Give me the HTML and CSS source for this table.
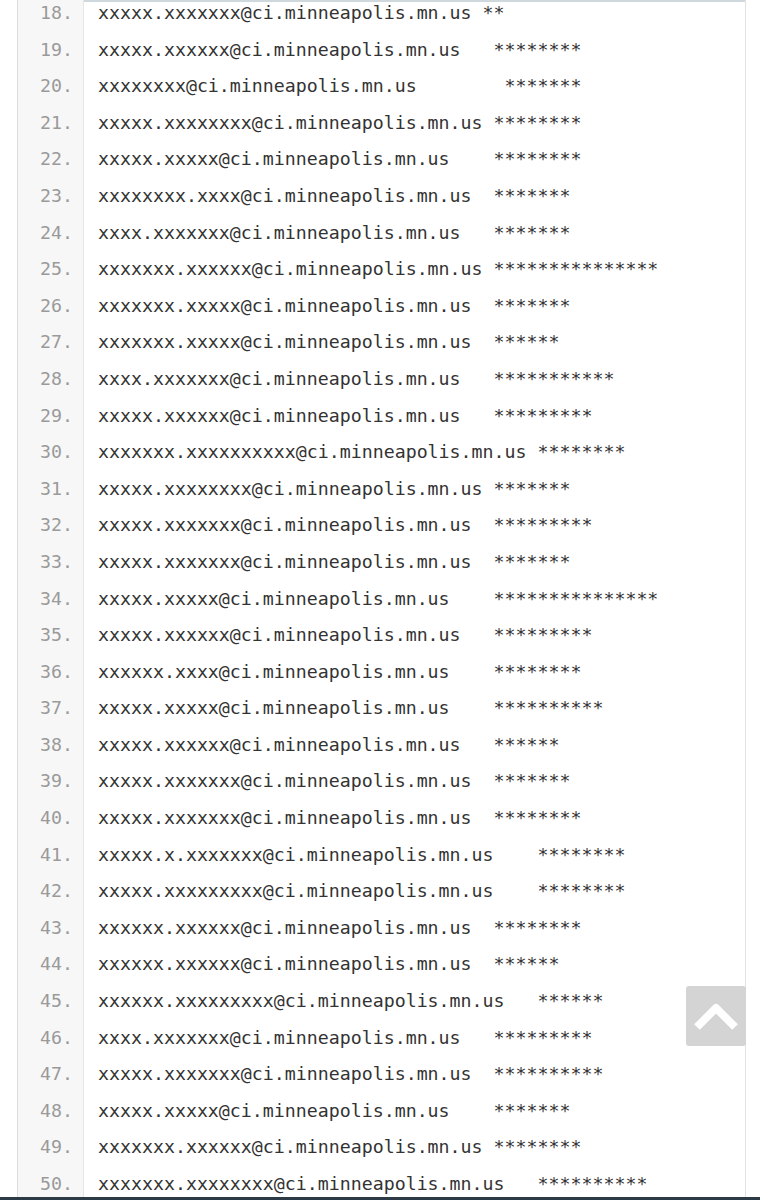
FILE: index.html
```html
<!DOCTYPE html>
<html lang="en">
<head>
	<meta charset="UTF-8">
	<title>listing</title>
	<link rel="stylesheet" href="styles.css">
</head>
<body>
	<div class="frame">
		<div class="listing">
			<div class="row"><span class="num">18.</span><span class="line">xxxxx.xxxxxxx@ci.minneapolis.mn.us **</span></div>
			<div class="row"><span class="num">19.</span><span class="line">xxxxx.xxxxxx@ci.minneapolis.mn.us   ********</span></div>
			<div class="row"><span class="num">20.</span><span class="line">xxxxxxxx@ci.minneapolis.mn.us        *******</span></div>
			<div class="row"><span class="num">21.</span><span class="line">xxxxx.xxxxxxxx@ci.minneapolis.mn.us ********</span></div>
			<div class="row"><span class="num">22.</span><span class="line">xxxxx.xxxxx@ci.minneapolis.mn.us    ********</span></div>
			<div class="row"><span class="num">23.</span><span class="line">xxxxxxxx.xxxx@ci.minneapolis.mn.us  *******</span></div>
			<div class="row"><span class="num">24.</span><span class="line">xxxx.xxxxxxx@ci.minneapolis.mn.us   *******</span></div>
			<div class="row"><span class="num">25.</span><span class="line">xxxxxxx.xxxxxx@ci.minneapolis.mn.us ***************</span></div>
			<div class="row"><span class="num">26.</span><span class="line">xxxxxxx.xxxxx@ci.minneapolis.mn.us  *******</span></div>
			<div class="row"><span class="num">27.</span><span class="line">xxxxxxx.xxxxx@ci.minneapolis.mn.us  ******</span></div>
			<div class="row"><span class="num">28.</span><span class="line">xxxx.xxxxxxx@ci.minneapolis.mn.us   ***********</span></div>
			<div class="row"><span class="num">29.</span><span class="line">xxxxx.xxxxxx@ci.minneapolis.mn.us   *********</span></div>
			<div class="row"><span class="num">30.</span><span class="line">xxxxxxx.xxxxxxxxxx@ci.minneapolis.mn.us ********</span></div>
			<div class="row"><span class="num">31.</span><span class="line">xxxxx.xxxxxxxx@ci.minneapolis.mn.us *******</span></div>
			<div class="row"><span class="num">32.</span><span class="line">xxxxx.xxxxxxx@ci.minneapolis.mn.us  *********</span></div>
			<div class="row"><span class="num">33.</span><span class="line">xxxxx.xxxxxxx@ci.minneapolis.mn.us  *******</span></div>
			<div class="row"><span class="num">34.</span><span class="line">xxxxx.xxxxx@ci.minneapolis.mn.us    ***************</span></div>
			<div class="row"><span class="num">35.</span><span class="line">xxxxx.xxxxxx@ci.minneapolis.mn.us   *********</span></div>
			<div class="row"><span class="num">36.</span><span class="line">xxxxxx.xxxx@ci.minneapolis.mn.us    ********</span></div>
			<div class="row"><span class="num">37.</span><span class="line">xxxxx.xxxxx@ci.minneapolis.mn.us    **********</span></div>
			<div class="row"><span class="num">38.</span><span class="line">xxxxx.xxxxxx@ci.minneapolis.mn.us   ******</span></div>
			<div class="row"><span class="num">39.</span><span class="line">xxxxx.xxxxxxx@ci.minneapolis.mn.us  *******</span></div>
			<div class="row"><span class="num">40.</span><span class="line">xxxxx.xxxxxxx@ci.minneapolis.mn.us  ********</span></div>
			<div class="row"><span class="num">41.</span><span class="line">xxxxx.x.xxxxxxx@ci.minneapolis.mn.us    ********</span></div>
			<div class="row"><span class="num">42.</span><span class="line">xxxxx.xxxxxxxxx@ci.minneapolis.mn.us    ********</span></div>
			<div class="row"><span class="num">43.</span><span class="line">xxxxxx.xxxxxx@ci.minneapolis.mn.us  ********</span></div>
			<div class="row"><span class="num">44.</span><span class="line">xxxxxx.xxxxxx@ci.minneapolis.mn.us  ******</span></div>
			<div class="row"><span class="num">45.</span><span class="line">xxxxxx.xxxxxxxxx@ci.minneapolis.mn.us   ******</span></div>
			<div class="row"><span class="num">46.</span><span class="line">xxxx.xxxxxxx@ci.minneapolis.mn.us   *********</span></div>
			<div class="row"><span class="num">47.</span><span class="line">xxxxx.xxxxxxx@ci.minneapolis.mn.us  **********</span></div>
			<div class="row"><span class="num">48.</span><span class="line">xxxxx.xxxxx@ci.minneapolis.mn.us    *******</span></div>
			<div class="row"><span class="num">49.</span><span class="line">xxxxxxx.xxxxxx@ci.minneapolis.mn.us ********</span></div>
			<div class="row"><span class="num">50.</span><span class="line">xxxxxxx.xxxxxxxx@ci.minneapolis.mn.us   **********</span></div>
		</div>
	</div>

	<!-- back to top -->
	<a class="totop" href="#">
		<svg width="46" height="30" viewBox="0 0 46 30">
			<polyline points="4,26 23,7 42,26" fill="none" stroke="#fff" stroke-width="8" stroke-linejoin="round"/>
		</svg>
	</a>
	<div class="bottombar"></div>
</body>
</html>
```

FILE: styles.css
```css
html,
body {
	margin: 0;
	padding: 0;
	background: #fff;
}

.frame {
	margin-left: 17px;
	width: 727px;
	height: 1200px;
	overflow: hidden;
	border-left: 1px solid #dcdcdc;
	border-right: 1px solid #e2e2e2;
	box-shadow: inset 0 2px 0 #cfd8dc;
}

.listing {
	margin-top: -5px;
	font: 18.25px/36.6px 'DejaVu Sans Mono', 'Liberation Mono', monospace;
}

.row {
	display: flex;
	height: 36.6px;
}

.num {
	flex: 0 0 55px;
	padding-right: 10px;
	text-align: right;
	color: #9a9a9a;
	background: #f7f7f7;
	border-right: 1px solid #e6e6e6;
}

.line {
	padding-left: 14px;
	color: #333;
	white-space: pre;
}

.totop {
	position: fixed;
	left: 686px;
	top: 986px;
	width: 60px;
	height: 60px;
	border-radius: 3px;
	background: #d4d4d4;
	display: flex;
	align-items: center;
	justify-content: center;
}

.bottombar {
	position: fixed;
	left: 0;
	right: 0;
	bottom: 0;
	height: 3px;
	background: #2b3a44;
}
```
